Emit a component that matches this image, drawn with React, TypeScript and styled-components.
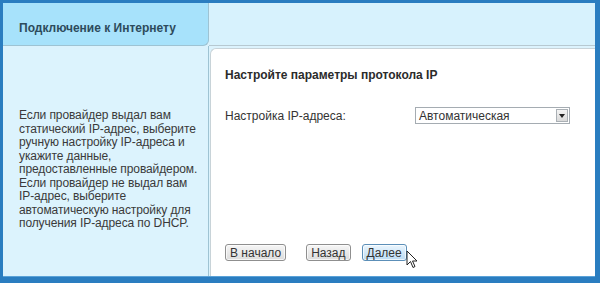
import React from 'react'
import styled, { createGlobalStyle } from 'styled-components'

const GlobalStyle = createGlobalStyle`
  html, body {
    margin: 0;
    padding: 0;
    background: #ffffff;
  }
  body {
    font-family: 'Liberation Sans', Arial, sans-serif;
  }
`

const Frame = styled.div`
  width: 600px;
  height: 283px;
  box-sizing: border-box;
  border-style: solid;
  border-color: #2a7dc0;
  border-width: 3px 5px 6px 3px;
  background: #dcf3fd;
  display: grid;
  grid-template-columns: 206px 1fr;
  grid-template-rows: 43px 1fr;
  position: relative;
  &::after {
    content: '';
    position: absolute;
    left: 0;
    right: 0;
    bottom: 0;
    height: 1px;
    background: #5aa2d8;
  }
`

const Tab = styled.div`
  background: #a7e2fb;
  border-right: 1px solid #9ec3d3;
  border-bottom: 1px solid #9ec3d3;
  border-bottom-right-radius: 6px;
  display: flex;
  align-items: center;
  padding-left: 16px;
  padding-top: 7px;
  font-size: 12px;
  font-weight: bold;
  color: #2d4b5c;
`

const HeaderRest = styled.div`
  background: #d7f2fd;
  border-bottom: 1px solid #b7c9d1;
`

const Side = styled.div`
  border-right: 1px solid #9ec3d3;
  padding: 63px 0 0 16px;
  font-size: 12px;
  line-height: 13.5px;
  color: #3a3a3a;
  white-space: nowrap;
  letter-spacing: -0.1px;
`

const Main = styled.div`
  background: #ffffff;
  margin-top: 2px;
  margin-left: 1px;
  border-top: 1px solid #c8d3d8;
  border-left: 1px solid #c8d3d8;
  border-top-left-radius: 6px;
  padding: 19px 0 0 14px;
  display: flex;
  flex-direction: column;
`

const Title = styled.div`
  font-size: 12px;
  font-weight: bold;
  color: #2b2b2b;
`

const FieldRow = styled.div`
  display: flex;
  align-items: center;
  margin-top: 25px;
  font-size: 12px;
  color: #333;
`

const FieldLabel = styled.span`
  width: 190px;
`

const Select = styled.div`
  width: 155px;
  height: 17px;
  box-sizing: border-box;
  border: 1px solid #a5acb2;
  display: flex;
  align-items: center;
  justify-content: space-between;
  padding-left: 3px;
  font-size: 12px;
  color: #333;
`

const SelectArrow = styled.span`
  width: 12px;
  height: 13px;
  margin-right: 1px;
  box-sizing: border-box;
  border: 1px solid #aab0b5;
  background: linear-gradient(#f4f4f4, #d9d9d9);
  display: flex;
  align-items: center;
  justify-content: center;
`

const Buttons = styled.div`
  margin-top: auto;
  margin-bottom: 16px;
  display: flex;
  align-items: center;
`

const Button = styled.button<{ $primary?: boolean; $gap?: number }>`
  height: 17px;
  padding: 0 4px;
  margin-right: ${(p) => p.$gap ?? 11}px;
  font-family: 'Liberation Sans', Arial, sans-serif;
  font-size: 12px;
  color: #333;
  border: 1px solid ${(p) => (p.$primary ? '#5c8fb8' : '#8f8f8f')};
  border-radius: 3px;
  background: ${(p) =>
    p.$primary
      ? 'linear-gradient(#eaf5fd, #bcdcf4)'
      : 'linear-gradient(#f6f6f6, #dcdcdc)'};
  box-shadow: inset 0 0 0 1px rgba(255, 255, 255, 0.7);
  display: flex;
  align-items: center;
  position: relative;
`

const Cursor = styled.svg`
  position: absolute;
  left: 43px;
  top: 5px;
`

const helpLines = [
  'Если провайдер выдал вам',
  'статический IP-адрес, выберите',
  'ручную настройку IP-адреса и',
  'укажите данные,',
  'предоставленные провайдером.',
  'Если провайдер не выдал вам',
  'IP-адрес, выберите',
  'автоматическую настройку для',
  'получения IP-адреса по DHCP.',
]

const App: React.FC = () => (
  <>
    <GlobalStyle />
    <Frame>
      <Tab>Подключение к Интернету</Tab>
      <HeaderRest />
      <Side>
        {helpLines.map((line) => (
          <div key={line}>{line}</div>
        ))}
      </Side>
      <Main>
        <Title>Настройте параметры протокола IP</Title>
        <FieldRow>
          <FieldLabel>Настройка IP-адреса:</FieldLabel>
          <Select>
            Автоматическая
            <SelectArrow>
              <svg width="6" height="4" viewBox="0 0 6 4">
                <path d="M0 0h6L3 4z" fill="#222" />
              </svg>
            </SelectArrow>
          </Select>
        </FieldRow>
        <Buttons>
          <Button $gap={20}>В начало</Button>
          <Button>Назад</Button>
          <Button $primary>
            Далее
            <Cursor width="12" height="19" viewBox="0 0 12 19">
              <path
                d="M1 1v14l3.5-3.5 2.5 6 2-1-2.5-5.5H11z"
                fill="#fff"
                stroke="#222"
                strokeWidth="1"
                strokeLinejoin="round"
              />
            </Cursor>
          </Button>
        </Buttons>
      </Main>
    </Frame>
  </>
)

export default App
